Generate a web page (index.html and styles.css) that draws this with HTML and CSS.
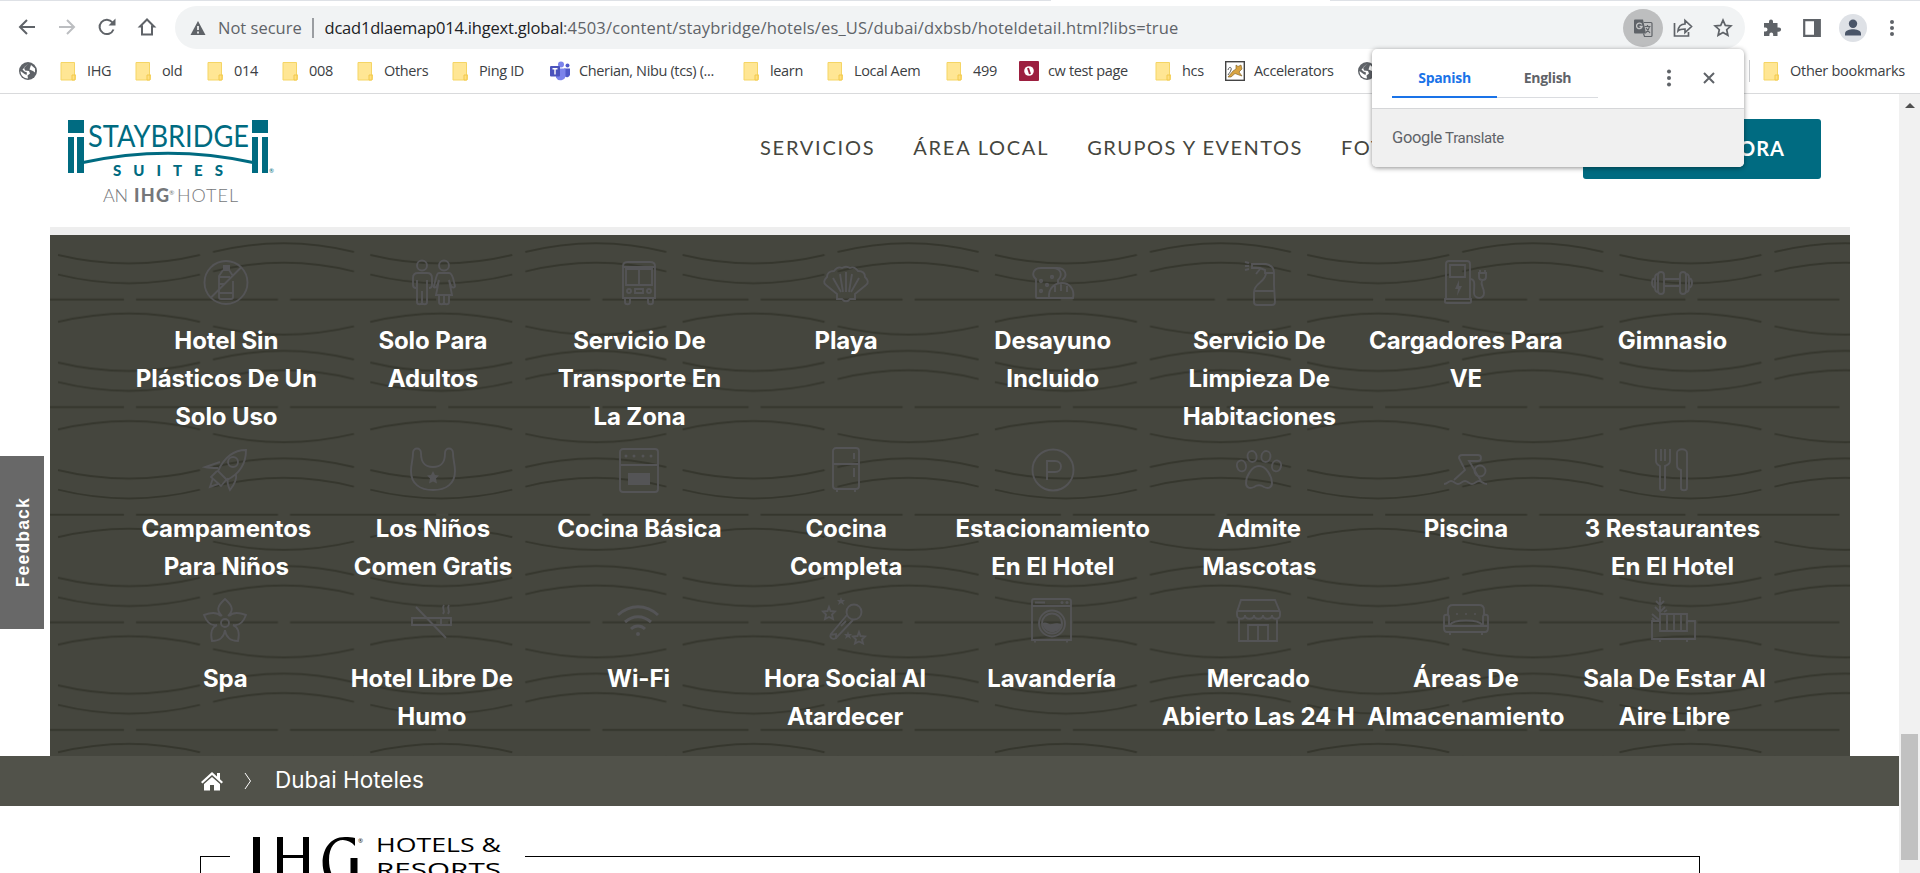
FILE: index.html
```html
<!DOCTYPE html>
<html lang="es">
<head>
<meta charset="utf-8">
<title>Staybridge Suites Dubai</title>
<link rel="stylesheet" href="styles.css">
</head>
<body>
<svg width="0" height="0" class="defs">
  <defs>
    <symbol id="folder" viewBox="0 0 16 20"><path d="M1 1.5h13.5V14H16v3.500l-1.500 1.500H1z" fill="#ffe694" stroke="#f5d565"/><path d="M12 14h3v5h-3z" fill="#ffe082" stroke="#f2c94c"/></symbol>
    <symbol id="globe" viewBox="0 0 20 20"><circle cx="10" cy="10" r="9" fill="#5f6368"/><path d="M10.500 2.500 6 6.500l1 3 4 .5 1 2.500-2.500 2 .5 3c-5 0-7.500-4-7.500-7.500l4 3 2 1 .5-2.500-2.500-1-2-2 4-4zM13 4l4 3.500v4l-2-1.500-3.500-1.500z" fill="#fff"/></symbol>
  </defs>
</svg>

<header class="chrome">
  <div class="tabstrip"><span></span><span></span></div>
  <div class="toolbar">
    <div class="navbtns">
      <svg width="20" height="20" viewBox="0 0 20 20"><path d="M18 10H3M10 3l-7 7 7 7"/></svg>
      <svg class="dim" width="20" height="20" viewBox="0 0 20 20"><path d="M2 10h15M10 3l7 7-7 7"/></svg>
      <svg width="20" height="20" viewBox="0 0 20 20"><path d="M16.500 12.500A7.200 7.200 0 1 1 15.500 5.500"/><path class="solid" d="M18.500 1.500v7h-7z"/></svg>
      <svg width="20" height="20" viewBox="0 0 20 20"><path d="M5 17.500V9.500H3L10 2.500l7 7h-2v8z"/></svg>
    </div>
    <div class="omnibox">
      <svg class="warn" width="16" height="16" viewBox="0 0 16 16"><path d="M8 1l7.500 14H.5z" fill="#5f6368"/><path d="M8 6v4M8 11.500v2" stroke="#fff" stroke-width="1.600"/></svg>
      <span class="insecure">Not secure</span>
      <span class="bar"></span>
      <span class="url"><b>dcad1dlaemap014.ihgext.global</b>:4503/content/staybridge/hotels/es_US/dubai/dxbsb/hoteldetail.html?libs=true</span>
      <div class="omni-icons">
        <span class="tr-btn"><svg width="20" height="20" viewBox="0 0 20 20"><path d="M2 1.500h8l3 14H2a1 1 0 0 1-1-1v-12a1 1 0 0 1 1-1z" fill="#5f6368"/><path d="M8.800 6.500a2.800 2.800 0 1 0 .3 2H6.500" fill="none" stroke="#c4c5c6" stroke-width="1.300"/><path d="M11 4.500h7a1 1 0 0 1 1 1v12a1 1 0 0 1-1 1h-6.500l-1-3M11.500 8.500h6M14.500 7v1.500M16.500 8.500c-.5 3-2 4.500-3.500 6M13 10l4 5" fill="none" stroke="#5f6368" stroke-width="1.200"/></svg></span>
        <svg class="line" width="20" height="20" viewBox="0 0 20 20"><path d="M1.500 5v13h14v-4M5 13c.5-5 3-7 7-7V2.500l6.500 6-6.500 6V11c-3 0-5.500.5-7 2z"/></svg>
        <svg class="line" width="20" height="20" viewBox="0 0 20 20"><path d="M10 2.200l2.300 5.200 5.600.5-4.200 3.800 1.200 5.600L10 14.400l-4.900 2.900 1.200-5.600-4.200-3.800 5.600-.5z"/></svg>
      </div>
    </div>
    <div class="ext">
      <svg width="20" height="20" viewBox="0 0 20 20"><path d="M7 3.500a2 2 0 0 1 4 0V5h4.500v4.500H17a2 2 0 0 1 0 4.200h-1.500V18h-4.300v-1.500a1.900 1.900 0 0 0-3.800 0V18H2v-4.500h1.500a2 2 0 0 0 0-4H2V5h5z" fill="#5f6368"/></svg>
      <svg width="20" height="20" viewBox="0 0 20 20"><path d="M2.200 2.200h15.600v15.600H2.200z" fill="none" stroke="#5f6368" stroke-width="2.200"/><path d="M12 2h6v16h-6z" fill="#5f6368"/></svg>
      <svg width="28" height="28" viewBox="0 0 28 28"><circle cx="14" cy="14" r="14" fill="#dee1e6"/><circle cx="14" cy="9.800" r="4.200" fill="#4a5568"/><path d="M6 21.500v-2c0-3.300 5-4.300 8-4.300s8 1 8 4.300v2z" fill="#4a5568"/></svg>
      <svg width="20" height="20" viewBox="0 0 20 20" fill="#5f6368"><circle cx="10" cy="4" r="2"/><circle cx="10" cy="10" r="2"/><circle cx="10" cy="16" r="2"/></svg>
    </div>
  </div>
  <nav class="bookmarks">
    <span><svg class="ico"><use href="#globe"/></svg></span>
    <span><svg class="fold"><use href="#folder"/></svg>IHG</span>
    <span><svg class="fold"><use href="#folder"/></svg>old</span>
    <span><svg class="fold"><use href="#folder"/></svg>014</span>
    <span><svg class="fold"><use href="#folder"/></svg>008</span>
    <span><svg class="fold"><use href="#folder"/></svg>Others</span>
    <span><svg class="fold"><use href="#folder"/></svg>Ping ID</span>
    <span><svg class="ico" viewBox="0 0 20 20"><circle cx="11" cy="3.500" r="3" fill="#7b83eb"/><circle cx="17.500" cy="4.500" r="2" fill="#5059c9"/><path d="M14 7.500h6v6a3 3 0 0 1-5 2z" fill="#5059c9"/><path d="M6 7.500h9.500v7a5 5 0 0 1-9.500 2z" fill="#7b83eb"/><rect y="5" width="10" height="10.500" rx="1" fill="#4b53bc"/><path d="M2.500 7.800h5M5 7.800v5.700" stroke="#fff" stroke-width="1.400"/></svg>Cherian, Nibu (tcs) (...</span>
    <span><svg class="fold"><use href="#folder"/></svg>learn</span>
    <span><svg class="fold"><use href="#folder"/></svg>Local Aem</span>
    <span><svg class="fold"><use href="#folder"/></svg>499</span>
    <span><svg class="ico" viewBox="0 0 20 20"><rect width="20" height="20" rx="1" fill="#9c1f3f"/><circle cx="10" cy="10" r="4.800" fill="#fff"/><path d="M9 7l2 6" stroke="#9c1f3f" stroke-width="2"/></svg>cw test page</span>
    <span><svg class="fold"><use href="#folder"/></svg>hcs</span>
    <span><svg class="ico" viewBox="0 0 20 20"><rect x=".7" y=".7" width="18.600" height="18.600" fill="#fff" stroke="#444" stroke-width="1.400"/><path d="m11 4 2 1.500L16 4l1 4-3 3 3 4-3-1-4-1.500L6 16H3l5-6 3-2z" fill="#d9a441" stroke="#7a5a20" stroke-width=".6"/><path d="M3 9c1-4 4-3 3 0s-2 3-3 5" fill="none" stroke="#555"/></svg>Accelerators</span>
    <span><svg class="ico"><use href="#globe"/></svg></span>
    <span class="other"><svg class="fold"><use href="#folder"/></svg>Other bookmarks</span>
  </nav>
</header>

<div class="viewport">
<main class="page">
  <div class="site-head">
    <svg class="logo" width="206" height="90" viewBox="0 0 206 90">
      <g fill="#006b81">
        <path d="M0 3h16v13H0zM0 20h6v36H0zM9 20h7v36H9zM184 3h16v13h-16zM184 20h6v36h-6zM194 20h6v36h-6z"/>
        <text x="20" y="30" font-size="31" textLength="161" lengthAdjust="spacingAndGlyphs" class="brand">STAYBRIDGE</text>
        <text x="45" y="59" font-size="15" textLength="110" class="suites">SUITES</text>
        <text x="201" y="56" font-size="6">®</text>
      </g>
      <path d="M15 45.500Q100 27 185 45.500" fill="none" stroke="#006b81" stroke-width="3"/>
      <g fill="#75777a" font-size="18">
        <text x="35" y="85" textLength="25" class="light">AN</text>
        <text x="66" y="85" textLength="35" class="heavy">IHG</text>
        <text x="101" y="78" font-size="6.500">®</text>
        <text x="109" y="85" textLength="61" class="light">HOTEL</text>
      </g>
    </svg>
    <nav class="site-nav"><a>SERVICIOS</a><a>ÁREA LOCAL</a><a class="tight">GRUPOS Y EVENTOS</a><a>FOTOS</a></nav>
    <a class="book">RESERVE AHORA</a>
  </div>

  <section class="amenities">
    <svg class="waves" width="1800" height="521">
      <defs><pattern id="w" width="312.300" height="107.600" patternUnits="userSpaceOnUse">
        <g fill="none" stroke="#35362d" stroke-width="2">
          <path d="M8 20Q79 37 150 20M8 39.500Q79 57 150 39.500M163 17Q234-.5 304 17M163 36.500Q234 19 304 36.500"/>
          <path d="M0 64.400H74M86 64.400H228M240 64.400H313"/>
          <path d="M8 87Q79 70 150 87M163 91.300Q234 108 304 91.300"/>
        </g></pattern></defs>
      <rect width="1800" height="521" fill="url(#w)"/>
    </svg>
    <div class="grid">
      <div class="item"><svg viewBox="0 0 48 48"><circle cx="24" cy="23.500" r="21.500"/><path d="M39.500 8 9 38.500M21 11l-4 6v21c0 1 1 2 2 2h10c1 0 2-1 2-2V22M27 11l4 6M17 18h11M17 25h6M17 34h14"/><path class="f" d="M21 6h7v6h-7z"/></svg>Hotel Sin<br>Plásticos De Un<br>Solo Uso</div>
      <div class="item"><svg viewBox="0 0 48 48"><circle cx="13" cy="6.500" r="5"/><circle cx="35" cy="6.500" r="5"/><path d="M7 29c-2 0-3-1-3-3v-7c0-3 2-5 5-5h9c3 0 5 2 5 5v7c0 2-1 3-3 3M8 21v22c0 3 5 3 5 0V32M18 21v22c0 3-5 3-5 0M30 14h10c2 0 3 2 4 5l2 8c0 2-3 2-4 0l-2-6 3 15H27l3-15-2 6c-1 2-4 2-3 0l2-8c1-3 1-5 3-5zM30 36v7c0 3 5 3 5 0v-7M40 36v7c0 3-5 3-5 0"/></svg>Solo Para<br>Adultos</div>
      <div class="item"><svg viewBox="0 0 48 48"><path d="M8 39V7c0-3 2-4 5-4h22c3 0 5 1 5 4v32zM8 8h32M11 10h26v16H11zM24 10v16M10 39v4c0 3 5 3 5 0v-4M33 39v4c0 3 5 3 5 0v-4M20 30h8v4h-8z"/><circle cx="14" cy="32" r="2"/><circle cx="34" cy="32" r="2"/></svg>Servicio De<br>Transporte En<br>La Zona</div>
      <div class="item"><svg viewBox="0 0 48 48"><path d="M15 35 4 26c-3-2-2-5 1-8 0-4 3-6 7-6 3-4 6-4 8-3 3-2 5-2 8 0 2-1 5-1 8 3 4 0 7 2 7 6 3 3 4 6 1 8L33 35v5h-5c-2 3-6 3-8 0h-5zM24 13v20M18 15l3 18M30 15l-3 18M11 19l8 14M37 19l-8 14"/></svg>Playa</div>
      <div class="item"><svg viewBox="0 0 48 48"><path d="M7 38V20c-5-4-3-11 5-11h12c8 0 10 7 5 12v4M24 9h4c9 0 11 8 5 12M7 38c0 1 0 1 1 1h36c2-9-4-15-11-15s-14 5-13 15M26 27v6M32 25v7M38 27v6"/><circle cx="12" cy="22" r="1.200"/><circle cx="23" cy="18" r="1.200"/><circle cx="12" cy="32" r="1.200"/><circle cx="18" cy="26" r="1.200"/></svg>Desayuno<br>Incluido</div>
      <div class="item"><svg viewBox="0 0 48 48"><path d="M17 5h14c5 1 8 4 8 9h-9v-3l-5-2h-8zM25 10l-4 5M31 14c0 9-12 10-12 19v10c0 2 1 3 3 3h15c2 0 3-1 3-3l-1-17V14M19 32h21M10 3l4 1M10 7h4M10 11l4-1"/></svg>Servicio De<br>Limpieza De<br>Habitaciones</div>
      <div class="item"><svg viewBox="0 0 48 48"><path d="M4 40V5c0-2 1-3 3-3h18c2 0 3 1 3 3v35zM8 6h15v12H8zM3 40h26v3c0 1-1 1-2 1H5c-1 0-2 0-2-1zM28 20c6 0 4 7 4 14 0 6 10 7 10 0 0-6-4-7-2-13M36 14h9M37 14v4c0 4 7 4 7 0v-4M38 11v3M43 11v3"/><path class="f" d="m17 21-4 9h3l-1 7 5-10h-3z"/></svg>Cargadores Para<br>VE</div>
      <div class="item"><svg viewBox="0 0 48 48"><path d="M16 20h16M16 27h16"/><rect x="10" y="13" width="6" height="22" rx="3"/><rect x="32" y="13" width="6" height="22" rx="3"/><path d="M10 15c-3 0-3 2-3 4-4 1-4 8 0 10 0 2 0 4 3 4M38 15c3 0 3 2 3 4 4 1 4 8 0 10 0 2 0 4-3 4M7 19v10M41 19v10"/></svg>Gimnasio</div>

      <div class="item two"><svg viewBox="0 0 48 48"><path d="M44 3c-14 0-22 8-28 21l9 9C37 27 44 17 44 3zM18 15 3 20c4 1 8 1 13 1M34 27c1 6-2 11-6 16-2-4-3-8-2-12M15 24l-6 6 10 9 5-6M11 31l-3 9 8-3"/><circle cx="31" cy="15" r="5"/></svg>Campamentos<br>Para Niños</div>
      <div class="item two"><svg viewBox="0 0 48 48"><path d="M4 6c0-6 8-6 8 0 0 9 3 14 12 14s12-5 12-14c0-6 8-6 8 0 0 7 2 11 2 18 0 13-9 19-22 19S2 37 2 24C2 17 4 13 4 6z"/><path class="f" d="m24 24 2 4 4 .5-3 3 1 5-4-2-4 2 1-5-3-3 4-.5z"/></svg>Los Niños<br>Comen Gratis</div>
      <div class="item two"><svg viewBox="0 0 48 48"><rect x="5" y="2" width="38" height="43" rx="3"/><path d="M5 18h38"/><path class="f" d="M13 26h22v12H13z"/><g class="f"><circle cx="11" cy="9" r="1.500"/><circle cx="19" cy="9" r="1.500"/><circle cx="28" cy="9" r="1.500"/><circle cx="36" cy="9" r="1.500"/></g></svg>Cocina Básica</div>
      <div class="item two"><svg viewBox="0 0 48 48"><rect x="11" y="1" width="26" height="41" rx="3"/><path d="M11 17h26M32 6v6M32 21v9M15 42v3M33 42v3"/></svg>Cocina<br>Completa</div>
      <div class="item two"><svg viewBox="0 0 48 48"><circle cx="24" cy="23" r="20.500"/><path d="M18 33V14h8c8 0 8 11 0 11h-8"/></svg>Estacionamiento<br>En El Hotel</div>
      <div class="item two"><svg viewBox="0 0 48 48"><ellipse cx="17" cy="9.500" rx="4.500" ry="5.500" transform="rotate(-10 17 9)"/><ellipse cx="31" cy="9.500" rx="4.500" ry="5.500" transform="rotate(10 31 9)"/><ellipse cx="6.500" cy="19" rx="4.500" ry="5.500" transform="rotate(-15 6 19)"/><ellipse cx="41.500" cy="19" rx="4.500" ry="5.500" transform="rotate(15 42 19)"/><path d="M24 19c7 0 13 10 13 17 0 5-4 6-8 4-3-2-7-2-10 0-4 2-8 1-8-4 0-7 6-17 13-17z"/></svg>Admite<br>Mascotas</div>
      <div class="item two"><svg viewBox="0 0 48 48"><path d="M2 37c4 0 4-3 7-3s4 3 7 3 4-3 7-3 4 3 7 3 4-3 7-3 4 3 8 3M12 33l11-10-6-12c0-2 1-3 3-3h16c4 0 4 6 0 6h-9l12 20"/><circle cx="38" cy="24" r="5.500"/></svg>Piscina</div>
      <div class="item two"><svg viewBox="0 0 48 48"><path d="M8 2v12c0 3 2 4 4 5v22c0 3 5 3 5 0V19c3-1 5-2 5-5V2M13 2v12M17 2v12M29 6c0-5 10-5 10 0v35c0 3-6 3-6 0V23c-4-1-4-3-4-6z"/></svg>3 Restaurantes<br>En El Hotel</div>

      <div class="item three"><svg viewBox="0 0 48 48"><circle cx="24" cy="26" r="4"/><path d="M21 19c-5-5-6-9 3-17 9 8 8 12 3 17M28 19c4-4 9-4 17-1-3 8-8 11-13 10 5 2 7 8 5 16-7 0-12-3-13-11-1 8-6 11-13 11-2-8 0-14 5-16-5 1-10-2-13-10 8-3 13-3 17 1"/></svg>Spa</div>
      <div class="item three"><svg viewBox="0 0 48 48"><path d="M4 21h39v7H4zM33 21v7M8 10l30 31M36 8c-3 4 2 4-1 9M41 8c-3 4 2 4-1 9"/></svg>Hotel Libre De<br>Humo</div>
      <div class="item three wifi"><svg viewBox="0 0 48 48"><path d="M4 18c12-11 28-11 40 0M11 25c8-7 18-7 26 0M17 32c4-4 10-4 14 0"/><circle class="f" cx="24" cy="37" r="2"/></svg>Wi-Fi</div>
      <div class="item three"><svg viewBox="0 0 48 48"><circle cx="33" cy="15" r="7.500"/><path d="M26 18 10 37c-2 4 2 6 5 4l17-18M9 38l6-1v5M20 29l5-5"/><path class="f" d="m20 0 1 3h3l-2 2 1 3-3-2-3 2 1-3-2-2h3zM27 34l1 3h3l-2 2 1 3-3-2-3 2 1-3-2-2h3z"/><path d="m8 10 1.500 4 4.500.5-3 3 1 4.500-4-2-4 2 1-4.500-3-3 4.500-.5zM38 35l1.500 4 4.500.5-3 3 1 4-4-2-4 2 1-4-3-3 4.500-.5z"/></svg>Hora Social Al<br>Atardecer</div>
      <div class="item three"><svg viewBox="0 0 48 48"><path d="M4 43V4c0-1 1-2 2-2h34c2 0 3 1 3 2v39zM4 9h39M7 5.500h10M7 43v2.500M39 43v2.500"/><circle cx="24" cy="26.500" r="13"/><circle cx="24" cy="26.500" r="10"/><path class="f" d="M14.500 26c4-2 6 2 9.500 1s5-1 9.500 0c-1 11-18 11-19-1z"/><circle class="f" cx="34" cy="5.500" r="1.500"/><circle class="f" cx="39" cy="5.500" r="1.500"/></svg>Lavandería</div>
      <div class="item three"><svg viewBox="0 0 48 48"><path d="M7 3h34l5 12v3c0 5-8 5-8 0 0 5-9 5-9 0 0 5-9 5-9 0 0 5-9 5-9 0 0 5-8 5-8 0v-3zM3 14h43M5 22v22h38V22M14 44V28h20v16M24 28v16"/></svg>Mercado<br>Abierto Las 24 H</div>
      <div class="item three c7"><svg viewBox="0 0 48 48"><path d="M6 18v-5c0-4 2-5 5-5h26c3 0 5 1 5 5v5M7 29V20c0-3-5-3-5 0v11c0 3 1 4 3 4h38c2 0 3-1 3-4V20c0-3-5-3-5 0v9M2 29h44M8 28c3-6 29-6 32 0M8 35v3M40 35v3"/><g class="f"><circle cx="15" cy="17" r="1"/><circle cx="24" cy="17" r="1"/><circle cx="33" cy="17" r="1"/></g></svg>Áreas De<br>Almacenamiento</div>
      <div class="item three c8"><svg viewBox="0 0 48 48"><path d="M10 24H2v18h43V24h-8M10 17h27v17H10zM17 17v17M24 17v17M31 17v17M10 42v3M37 42v3M10 17V0M6 4l4 4 4-4M5 10l5 5 5-5M14 15l3-2M2 17l7 6M2 21l3 3"/></svg>Sala De Estar Al<br>Aire Libre</div>
    </div>
  </section>

  <div class="crumbs">
    <svg width="24" height="20" viewBox="0 0 24 20"><path d="M12 1 1 11l1.500 1.500L12 4l9.500 8.500L23 11l-3-2.800V2h-3v3.500z" fill="#fff"/><path d="m12 6-8 7v6.500h6V14h4v5.500h6V13z" fill="#fff"/></svg>
    <svg width="8" height="18" viewBox="0 0 8 18"><path d="M1 1l5.500 8L1 17" fill="none" stroke="#fff"/></svg>
    <span>Dubai Hoteles</span>
  </div>

  <footer class="foot">
    <fieldset class="frame"><legend>
      <svg width="249" height="44" viewBox="0 0 249 44">
        <path d="M0 1h7v43H0zM24 1h6v18h20V1h6v43h-6V22H30v22h-6z"/>
        <path d="M97.500 22h7v22h-7zM102 2v8C92-1 76 3 76 24c0 8 2 14 6 20h-7c-10-12-7-43 17-43 4 0 7 0 10 1z"/>
        <text x="105" y="7" font-size="6">®</text>
        <text x="123" y="16" font-size="20" textLength="125" lengthAdjust="spacingAndGlyphs">HOTELS &amp;</text>
        <text x="123" y="41" font-size="20" textLength="125" lengthAdjust="spacingAndGlyphs">RESORTS</text>
      </svg></legend></fieldset>
  </footer>
  <div class="feedback"><span>Feedback</span></div>
</main>
<aside class="scroll"><i></i><b></b></aside>
</div>

<div class="popup">
  <div class="tabs"><span class="on">Spanish</span><span>English</span>
    <svg class="dots" width="20" height="20" viewBox="0 0 20 20" fill="#5f6368"><circle cx="10" cy="3.500" r="2"/><circle cx="10" cy="10" r="2"/><circle cx="10" cy="16.500" r="2"/></svg>
    <svg class="x" width="12" height="12" viewBox="0 0 12 12"><path d="M1 1l10 10M11 1 1 11" stroke="#5f6368" stroke-width="2"/></svg>
  </div>
  <div class="gt"><span>Google</span> Translate</div>
</div>
</body>
</html>
```
FILE: styles.css
```css
* { box-sizing: border-box; }
body { margin: 0; width: 1920px; height: 873px; overflow: hidden; background: #fff; position: relative; font-family: "Open Sans", sans-serif; }
.defs { position: absolute; }

.chrome { height: 94px; border-bottom: 1px solid #d9dadc; background: #fff; }
.tabstrip { display: flex; justify-content: space-between; height: 1px; }
.tabstrip span:first-child { width: 1051px; background: #dee1e6; }
.tabstrip span:last-child { width: 590px; background: #dee1e6; }
.toolbar { display: flex; height: 48px; padding-top: 5px; }
.navbtns { display: flex; width: 175px; padding: 11px 0 0 17px; gap: 20px; }
.navbtns svg { fill: none; stroke: #5f6368; stroke-width: 2; }
.navbtns .dim { stroke: #bcbec1; }
.navbtns .solid { fill: #5f6368; stroke: none; }
.omnibox { display: flex; align-items: center; width: 1570px; height: 43px; border-radius: 22px; background: #f1f3f4; padding-left: 15px; font-size: 16.5px; color: #5f6368; white-space: nowrap; }
.insecure { width: 94px; margin-left: 12px; }
.bar { width: 1.500px; height: 20px; background: #9a9da1; }
.url { width: 980px; margin-left: 11px; letter-spacing: .15px; }
.url b { font-weight: 400; color: #202124; letter-spacing: -.2px; }
.omni-icons { display: flex; align-items: center; margin-left: auto; padding-right: 12px; gap: 20px; }
.tr-btn { width: 40px; height: 38px; border-radius: 50%; background: #bdbebf; display: grid; place-items: center; margin-right: -10px; }
.line { fill: none; stroke: #5f6368; stroke-width: 1.700; }
.ext { display: flex; align-items: center; height: 43px; margin-left: 17px; gap: 20px; }
.ext svg:nth-child(3) { margin: 0 -3px; }
.ext svg:nth-child(4) { margin-left: -2px; }

.bookmarks { display: grid; grid-template-columns: 39px 75px 72px 75px 75px 95px 101px 190px 84px 119px 76px 133px 73px 132px 392px 160px; height: 43px; padding-left: 18px; align-items: center; font-size: 14.500px; color: #3c4043; white-space: nowrap; letter-spacing: -.35px; }
.bookmarks > span { display: flex; align-items: center; }
.bookmarks .ico { width: 20px; height: 20px; margin-right: 9px; }
.bookmarks .fold { width: 16px; height: 20px; margin: 0 11px 0 3px; }
.bookmarks .other { border-left: 1px solid #c9cbce; padding-left: 10px; height: 22px; letter-spacing: -.28px; }

.viewport { display: flex; height: 779px; }
.page { width: 1899px; position: relative; overflow: hidden; }
.site-head { display: flex; height: 133px; }
.logo { margin: 23px 0 0 68px; font-family: Lato, sans-serif; overflow: visible; }
.logo .suites { font-weight: 900; }
.logo .light { font-weight: 300; }
.logo .heavy { font-weight: 900; }
.site-nav { display: flex; gap: 38px; margin: 41px 0 0 486px; width: 823px; font: 400 20px/25px Lato, sans-serif; letter-spacing: 1.750px; color: #45463e; white-space: nowrap; }
.tight { letter-spacing: 1.500px; }
.book { width: 238px; height: 60px; margin-top: 25px; border-radius: 3px; background: #006b81; color: #fff; font: 700 20px/58px Lato, sans-serif; letter-spacing: 1px; text-align: right; padding-right: 36px; }

.amenities { position: relative; width: 1800px; height: 529px; margin-left: 50px; border-top: 8px solid #eee; background: #45463e; }
.waves { position: absolute; left: 0; top: 0; }
.grid { position: relative; display: grid; grid-template-columns: repeat(8, 206.600px); row-gap: 11px; padding: 24px 0 0 73px; }
.item { font: 700 24px/38px Inter, sans-serif; color: #fff; text-align: center; letter-spacing: -.1px; white-space: nowrap; }
.item svg { display: block; width: 48px; height: 48px; margin: 0 auto 15px; fill: none; stroke: #545456; stroke-width: 1.900; overflow: visible; }
.item .f { fill: #545456; stroke: none; }
.two { min-height: 139px; }
.three { position: relative; left: -1px; }
.c7 { left: 0; }
.c8 { left: 2px; }
.wifi svg { stroke-width: 3; }

.crumbs { display: flex; align-items: center; height: 50px; padding-left: 200px; background: #51524a; color: #fff; font: 400 22.500px/48px Inter, sans-serif; }
.crumbs span { height: 50px; }
.crumbs svg + svg { margin: 0 23px 0 20px; }
.foot { padding: 30px 199px 0 200px; }
.frame { height: 80px; margin: 0; padding: 0 0 0 29px; border: 1px solid #000; }
.frame legend { padding: 0 23px; height: 40px; }
.frame svg { font-family: "Open Sans", sans-serif; }
.feedback { position: absolute; left: 0; top: 362px; width: 44px; height: 173px; background: #686868; display: grid; place-items: center; }
.feedback span { writing-mode: vertical-rl; transform: rotate(180deg); margin-left: 3px; color: #fff; font: 700 17.500px "Liberation Sans", sans-serif; letter-spacing: 1.200px; }
.scroll { width: 21px; background: #f1f1f1; padding: 9px 2px 0; }
.scroll i { display: block; width: 0; margin: 0 auto; border: 5px solid transparent; border-top: 0; border-bottom-color: #505050; }
.scroll b { display: block; height: 126px; margin-top: 626px; background: #c1c1c1; }

.popup { position: absolute; left: 1372px; top: 49px; width: 372px; height: 118px; border-radius: 5px; background: #fff; box-shadow: 0 1px 5px rgba(0,0,0,.45); overflow: hidden; }
.tabs { display: flex; align-items: flex-start; height: 60px; padding-left: 20px; border-bottom: 1px solid #d5d6d8; font-size: 14px; font-weight: 700; letter-spacing: -.3px; color: #5f6368; }
.tabs span { height: 49px; width: 101px; text-align: center; line-height: 57px; border-bottom: 1px solid #dadce0; }
.tabs .on { width: 105px; color: #1a73e8; border-bottom: 2px solid #1a73e8; }
.dots { margin: 19px 0 0 61px; }
.x { margin: 23px 0 0 24px; }
.gt { height: 58px; background: #f0f0f0; padding-left: 20px; font: 400 15px/58px Roboto, sans-serif; color: #5f6368; letter-spacing: -.35px; }
.gt span { font-size: 16.500px; }
```
